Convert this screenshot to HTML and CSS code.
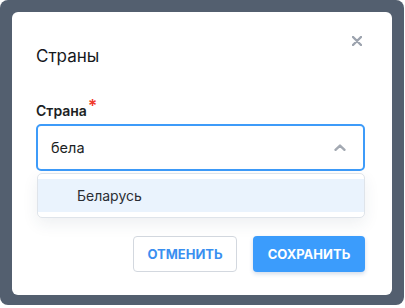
FILE: index.html
```html
<!DOCTYPE html>
<html lang="ru">
<head>
    <meta charset="UTF-8">
    <meta name="viewport" content="width=device-width, initial-scale=1.0">
    <title>Страны</title>
    <link rel="stylesheet" href="styles.css">
</head>
<body>
<div class="overlay">
    <div class="dialog">
        <div class="dialog-head">
            <h2 class="dialog-title">Страны</h2>
            <button class="close-btn" aria-label="Закрыть">
                <svg width="10" height="10" viewBox="0 0 10 10">
                    <path d="M1 1 L9 9 M9 1 L1 9" stroke="#9ca3ae" stroke-width="2.4" stroke-linecap="round"/>
                </svg>
            </button>
        </div>

        <div class="field">
            <label class="field-label" for="country">Страна<span class="required">*</span></label>
            <div class="select">
                <div class="select-box">
                    <span class="select-value" id="country">бела</span>
                    <svg class="chevron" width="12" height="7" viewBox="0 0 12 7">
                        <path d="M1.5 5.8 L6 1.6 L10.5 5.8" fill="none" stroke="#a3a9b2" stroke-width="2.4" stroke-linecap="round" stroke-linejoin="round"/>
                    </svg>
                </div>
                <ul class="select-menu">
                    <li class="select-option active">Беларусь</li>
                </ul>
            </div>
        </div>

        <div class="dialog-actions">
            <button class="btn btn-outline">Отменить</button>
            <button class="btn btn-primary">Сохранить</button>
        </div>
    </div>
</div>
</body>
</html>
```

FILE: styles.css
```css
body {
    margin: 0;
    padding: 0;
    background-color: #ffffff;
    font-family: Inter, 'Noto Sans', sans-serif;
    color: #1c1f24;
}
.overlay {
    box-sizing: border-box;
    width: 404px;
    height: 305px;
    padding: 12px 12px 10px 12px;
    background-color: #535f6f;
    border-radius: 8px;
}
.dialog {
    height: 100%;
    box-sizing: border-box;
    padding: 24px 27px 23px 24px;
    background-color: #ffffff;
    border-radius: 6px;
}
.dialog-head {
    display: flex;
    justify-content: space-between;
    align-items: flex-start;
}
.dialog-title {
    margin: 10px 0 0 0;
    font-size: 17px;
    line-height: 20px;
    font-weight: 400;
    color: #15181c;
}
.close-btn {
    margin: 0 3px 0 0;
    padding: 0;
    width: 10px;
    height: 10px;
    border: none;
    background: none;
    cursor: pointer;
    display: flex;
}
.field {
    margin-top: 36px;
}
.field-label {
    display: block;
    font-size: 14px;
    line-height: 18px;
    font-weight: 600;
    color: #1c1f24;
    margin-bottom: 4px;
}
.required {
    color: #f0392b;
    font-size: 17px;
    line-height: 10px;
    position: relative;
    top: -4px;
    margin-left: 1px;
}
.select {
    position: relative;
}
.select-box {
    box-sizing: border-box;
    height: 47px;
    display: flex;
    align-items: center;
    justify-content: space-between;
    padding: 0 17px 0 13px;
    border: 2px solid #3d9bf9;
    border-radius: 5px;
}
.select-value {
    font-size: 14.5px;
    color: #1c1f24;
}
.select-menu {
    position: absolute;
    top: 49px;
    left: 1px;
    right: 0;
    margin: 0;
    padding: 5px 0 5px 0;
    list-style: none;
    background-color: #ffffff;
    border: 1px solid #dfe4ea;
    border-radius: 5px;
    box-shadow: 0 6px 16px rgba(40, 60, 90, 0.08);
}
.select-option {
    height: 33px;
    line-height: 33px;
    padding-left: 39px;
    font-size: 14px;
    color: #2a2e34;
}
.select-option.active {
    background-color: #eaf3fd;
}
.dialog-actions {
    display: flex;
    justify-content: flex-end;
    gap: 16px;
    margin-top: 65px;
}
.btn {
    box-sizing: border-box;
    height: 36px;
    border-radius: 4px;
    font-family: inherit;
    font-size: 13px;
    font-weight: 700;
    text-transform: uppercase;
    cursor: pointer;
}
.btn-outline {
    width: 104px;
    background-color: #ffffff;
    border: 1px solid #d3d8df;
    color: #3a8ff0;
}
.btn-primary {
    width: 112px;
    background-color: #3b9cfc;
    border: none;
    color: #ffffff;
    box-shadow: 0 2px 4px rgba(30, 80, 150, 0.2);
}
```
